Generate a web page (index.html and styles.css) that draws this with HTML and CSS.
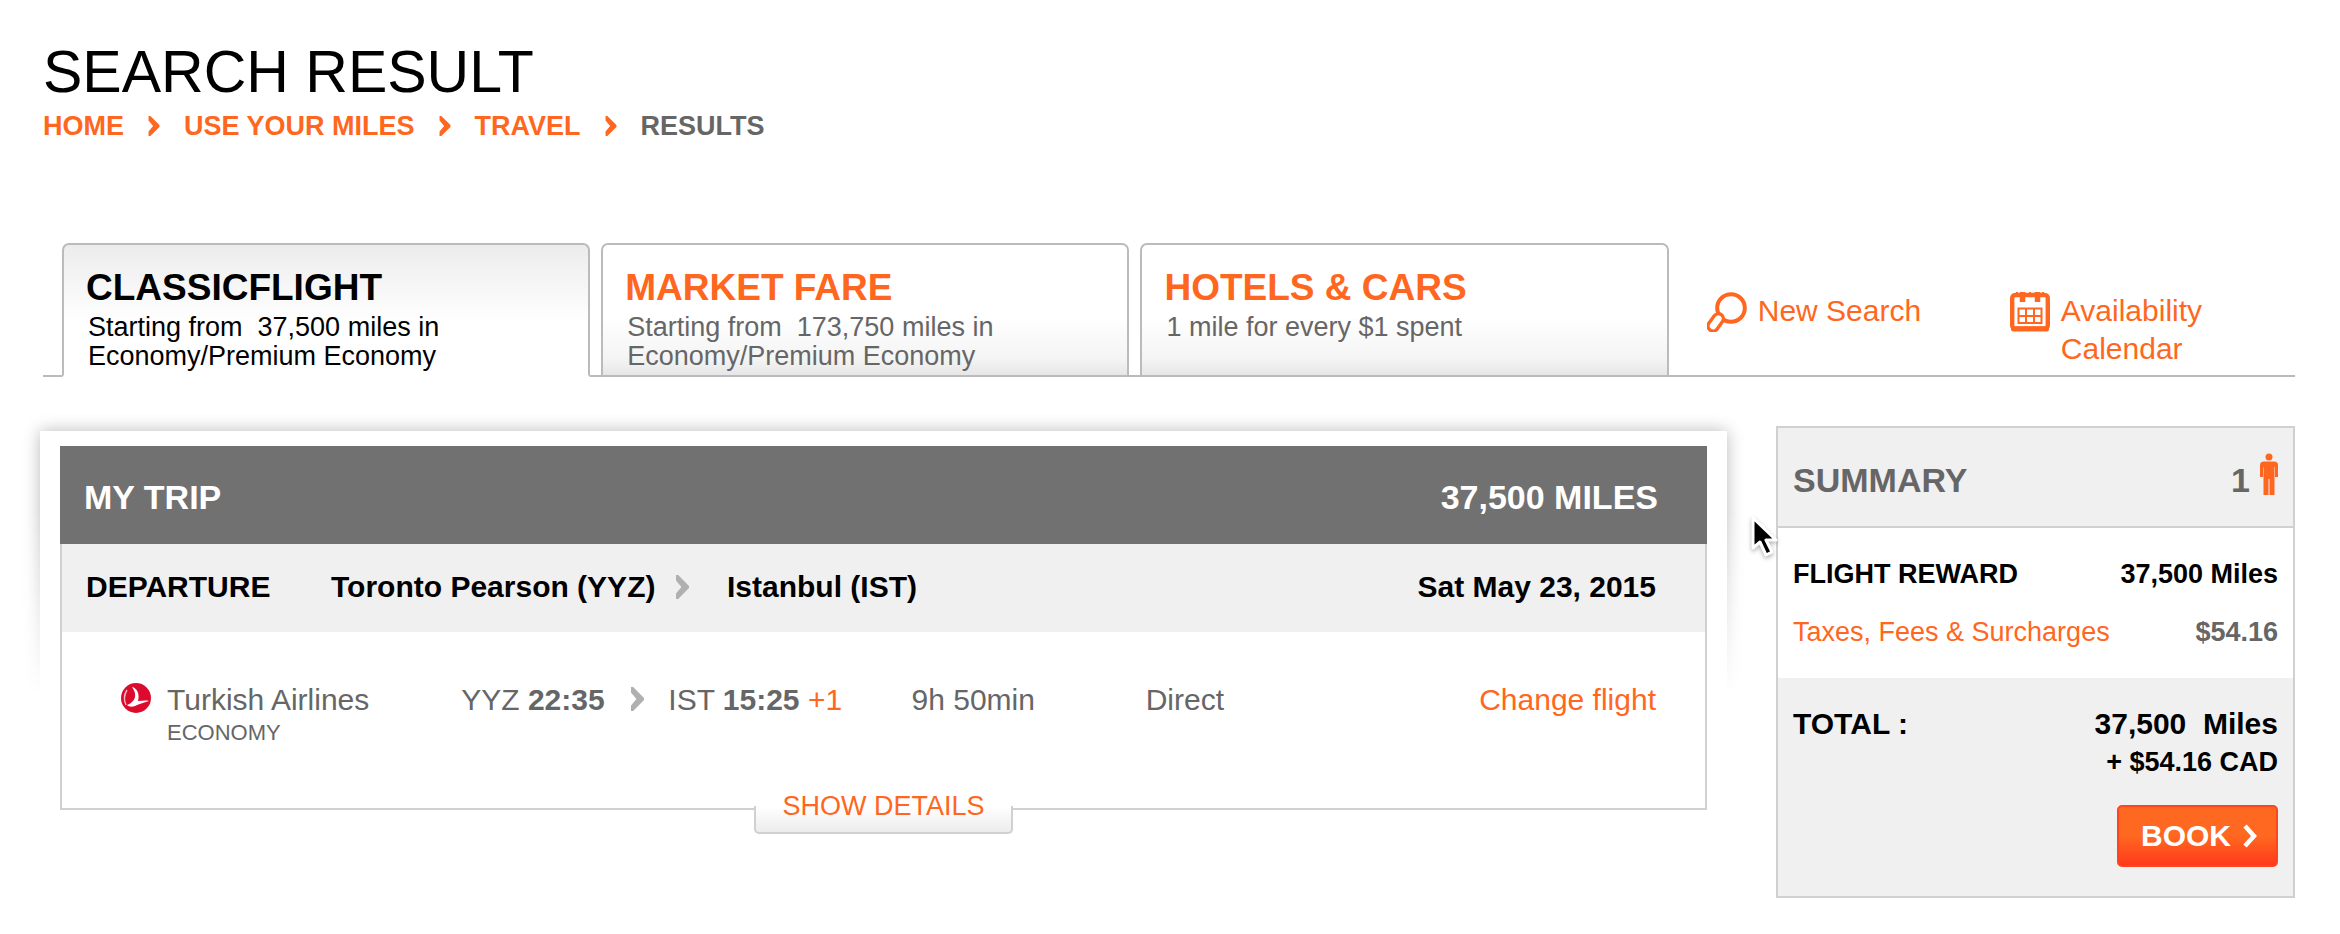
FILE: index.html
```html
<!DOCTYPE html>
<html lang="en">
<head>
<meta charset="utf-8">
<title>Search Result</title>
<link rel="stylesheet" href="styles.css">
</head>
<body>
<svg class="sprite" aria-hidden="true">
  <symbol id="chevron" viewBox="0 0 12 22"><path d="M0 0 L2 0 L12 10 V12 L2 22 H0 V17 L5 11 L0 5 Z"/></symbol>
</svg>

<header class="page-header">
  <h1 class="page-title">SEARCH RESULT</h1>
  <nav class="breadcrumb" aria-label="Breadcrumb">
    <a href="#">HOME</a>
    <svg class="crumb-arrow"><use href="#chevron"/></svg>
    <a href="#">USE YOUR MILES</a>
    <svg class="crumb-arrow"><use href="#chevron"/></svg>
    <a href="#">TRAVEL</a>
    <svg class="crumb-arrow"><use href="#chevron"/></svg>
    <span>RESULTS</span>
  </nav>
</header>

<nav class="tab-bar" aria-label="Reward types">
  <a class="tab tab-active" href="#">
    <span class="tab-title">CLASSICFLIGHT</span>
    <span class="tab-note">Starting from&nbsp; 37,500 miles in<br>Economy/Premium Economy</span>
  </a>
  <a class="tab" href="#">
    <span class="tab-title">MARKET FARE</span>
    <span class="tab-note">Starting from&nbsp; 173,750 miles in<br>Economy/Premium Economy</span>
  </a>
  <a class="tab" href="#">
    <span class="tab-title">HOTELS &amp; CARS</span>
    <span class="tab-note">1 mile for every $1 spent</span>
  </a>
  <div class="tools">
    <a class="tool" href="#">
      <svg class="tool-icon" viewBox="0 0 40 40" fill="none" stroke="currentColor">
        <circle cx="24" cy="16" r="13.8" stroke-width="4"/>
        <rect x="4" y="21" width="10" height="19" rx="5" transform="rotate(36 9 30)" fill="#fff" stroke-width="3.4"/>
      </svg>
      <span>New Search</span>
    </a>
    <a class="tool" href="#">
      <svg class="tool-icon" viewBox="0 0 40 40" fill="none" stroke="currentColor">
        <rect x="2.2" y="3" width="35.6" height="33.500" rx="3" stroke-width="4.4"/>
        <path d="M3.500 37 H36.500" stroke-width="5" stroke-linecap="round"/>
        <path d="M12.500 0 V10 M27.500 0 V10" stroke-width="5.500"/>
        <path d="M6 1 H8 M19 1 H21 M32 1 H34" stroke-width="2"/>
        <path d="M8.500 16.500 H31.500 V31 H8.500 Z M8.500 24 H31.500 M16 16.500 V31 M24 16.500 V31" stroke-width="2"/>
      </svg>
      <span>Availability Calendar</span>
    </a>
  </div>
</nav>

<main class="results">
  <section class="trip-panel">
    <article class="trip">
      <header class="trip-header">
        <h2 class="trip-title">MY TRIP</h2>
        <span>37,500 MILES</span>
      </header>
      <div class="leg">
        <span>DEPARTURE</span>
        <span>Toronto Pearson (YYZ)</span>
        <svg class="leg-arrow"><use href="#chevron"/></svg>
        <span>Istanbul (IST)</span>
        <span class="leg-date">Sat May 23, 2015</span>
      </div>
      <div class="flight">
        <div class="airline">
          <svg class="airline-logo" viewBox="0 0 30 30">
            <circle cx="15" cy="15" r="15" fill="#dc0a2d"/>
            <path d="M11 4 C16 5 19 11 17 18 C21 18 25 17 28 18 C24 19 18 21 14 23 C11 24 8 24 6 22 C11 20 15 16 14 11 C14 8 12 6 11 4 Z" fill="#fff"/>
            <path d="M6 7 C3 12 3 18 5 22" fill="none" stroke="#f7b5bf" stroke-width="1.500"/>
          </svg>
          <div>
            <div>Turkish Airlines</div>
            <div class="cabin">ECONOMY</div>
          </div>
        </div>
        <span>YYZ <b>22:35</b></span>
        <svg class="leg-arrow"><use href="#chevron"/></svg>
        <span>IST <b>15:25</b> <span class="plus-day">+1</span></span>
        <span>9h 50min</span>
        <span>Direct</span>
        <a class="change" href="#">Change flight</a>
      </div>
    </article>
    <button class="details" type="button">SHOW DETAILS</button>
  </section>

  <aside class="summary">
    <header class="summary-header">
      <h2 class="summary-title">SUMMARY</h2>
      <span class="travellers">1
        <svg class="person" viewBox="0 0 18 42" fill="currentColor">
          <circle cx="9" cy="4" r="3.500"/>
          <path d="M4 8.500 H14 Q18 8.500 18 12 V24 H15 V14 H14.500 V42 H9.500 V26 H8.500 V42 H3.500 V14 H3 V24 H0 V12 Q0 8.500 4 8.500 Z"/>
        </svg>
      </span>
    </header>
    <dl class="charges">
      <div class="charge charge-main"><dt>FLIGHT REWARD</dt><dd>37,500 Miles</dd></div>
      <div class="charge"><dt><a href="#">Taxes, Fees &amp; Surcharges</a></dt><dd>$54.16</dd></div>
    </dl>
    <div class="total">
      <div class="total-row">
        <span>TOTAL :</span>
        <span>37,500&nbsp; Miles</span>
      </div>
      <div class="total-cash">+ $54.16 CAD</div>
      <button class="book" type="button">BOOK <svg class="book-arrow" viewBox="0 0 15 24"><path d="M3 2 L12 12 L3 22" fill="none" stroke="currentColor" stroke-width="4.500"/></svg></button>
    </div>
  </aside>
</main>

<svg class="pointer" viewBox="0 0 28 42" aria-hidden="true">
  <path d="M2 2 V32 L9 26 L15 39 L21 36 L15 24 H25 Z" fill="#000" stroke="#fff" stroke-width="3" stroke-linejoin="round"/>
</svg>
</body>
</html>
```
FILE: styles.css
```css
:root {
  --orange: #ff6720;
  --grey: #666;
  --line: #bbb;
  --box: #d0d0d0;
  --pale: #f0f0f0;
}

* {
  box-sizing: border-box;
}

body {
  margin: 0;
  padding: 40px 0 36px;
  position: relative;
  background: #fff;
  color: var(--grey);
  font-family: "Liberation Sans", Arial, sans-serif;
  font-size: 30px;
  line-height: 34px;
}

h1, h2, dl, dd {
  margin: 0;
}

a {
  color: var(--orange);
  text-decoration: none;
}

button {
  font-family: inherit;
  cursor: pointer;
}

.sprite {
  position: absolute;
  width: 0;
  height: 0;
}

.page-header {
  padding: 0 43px;
}

.page-title {
  color: #000;
  font-size: 59px;
  font-weight: 400;
  line-height: 64px;
}

.breadcrumb {
  display: flex;
  align-items: center;
  gap: 24px;
  margin-top: 6px;
  font-size: 27px;
  font-weight: 700;
  line-height: 32px;
}

.crumb-arrow {
  width: 12px;
  height: 20px;
  fill: var(--orange);
}

.tab-bar {
  display: grid;
  grid-template-columns: 528fr 528fr 528fr 615fr;
  column-gap: 11px;
  margin: 101px 45px 0 43px;
  padding-left: 19px;
  border-bottom: 2px solid var(--line);
}

.tab {
  margin-bottom: -2px;
  padding: 23px 22px 4px;
  border: 2px solid var(--line);
  border-radius: 7px 7px 0 0;
  background: linear-gradient(#fff 55%, #f4f4f4 88%, #e6e6e6);
  color: var(--grey);
}

.tab-active {
  border-bottom-color: #fff;
  background: linear-gradient(#ececec, #fff 60%);
  color: #000;
}

.tab-title {
  display: block;
  color: var(--orange);
  font-size: 37px;
  font-weight: 700;
  line-height: 40px;
}

.tab-active .tab-title {
  color: #000;
}

.tab-note {
  display: block;
  padding: 5px 0 0 2px;
  font-size: 27px;
  line-height: 29px;
}

.tools {
  display: grid;
  grid-template-columns: 303fr 285fr;
  padding: 49px 0 0 27px;
  line-height: 38px;
}

.tool {
  display: flex;
  align-items: flex-start;
  gap: 11px;
}

.tool-icon {
  flex: none;
  width: 40px;
  height: 40px;
}

.results {
  display: grid;
  grid-template-columns: 1fr 519px;
  align-items: start;
  column-gap: 49px;
  padding: 49px 45px 0 40px;
}

.trip-panel {
  position: relative;
  isolation: isolate;
  margin-top: 5px;
  padding: 15px 20px 0;
}

/* Shadow round the upper part of the panel, faded out downwards */
.trip-panel::before {
  content: "";
  position: absolute;
  inset: 0 0 33%;
  z-index: -2;
  box-shadow: 0 0 16px rgba(0, 0, 0, 0.28);
}

.trip-panel::after {
  content: "";
  position: absolute;
  inset: 0 -20px;
  z-index: -1;
  background: linear-gradient(rgba(255, 255, 255, 0) 20%, #fff 66%);
}

.trip {
  background: #fff;
}

.trip-header {
  display: flex;
  justify-content: space-between;
  padding: 31px 49px 27px 24px;
  background: #717171;
  color: #fff;
  font-size: 34px;
  font-weight: 700;
  line-height: 40px;
}

.trip-title,
.summary-title {
  font-size: inherit;
}

.leg,
.flight {
  display: grid;
  border: 0 solid var(--box);
}

.leg {
  grid-template-columns: 245fr 345fr 51fr 340fr 589fr;
  align-items: center;
  padding: 26px 49px 28px 24px;
  border-width: 0 2px;
  background: var(--pale);
  color: #000;
  font-weight: 700;
}

.leg-date,
.change {
  text-align: right;
}

.leg-arrow {
  width: 13px;
  height: 24px;
  fill: #b0b0b0;
}

.flight {
  grid-template-columns: 340fr 170fr 37fr 243fr 234fr 200fr 310fr;
  align-items: start;
  padding: 51px 49px 62px 59px;
  border-width: 0 2px 2px;
}

.flight .leg-arrow {
  margin-top: 4px;
}

.airline {
  display: flex;
  gap: 16px;
}

.airline-logo {
  width: 30px;
  height: 30px;
}

.cabin {
  margin-top: 3px;
  font-size: 22px;
  line-height: 26px;
}

.plus-day {
  color: var(--orange);
}

.details {
  display: block;
  position: relative;
  isolation: isolate;
  margin: -19px auto 0;
  padding: 0 28px 13px;
  border: 0;
  background: none;
  color: var(--orange);
  font-size: 27px;
  line-height: 30px;
}

.details::before {
  content: "";
  position: absolute;
  inset: auto 0 0;
  z-index: -1;
  height: 26px;
  border: 2px solid var(--box);
  border-top: 0;
  border-radius: 0 0 5px 5px;
  background: linear-gradient(#fff, #ececec);
}

.summary {
  border: 2px solid var(--box);
}

.summary-header {
  display: flex;
  justify-content: space-between;
  padding: 32px 15px 26px;
  border-bottom: 2px solid var(--box);
  background: var(--pale);
  font-size: 34px;
  font-weight: 700;
  line-height: 40px;
}

.travellers {
  display: flex;
  align-items: flex-end;
  gap: 10px;
  height: 40px;
}

.person {
  width: 18px;
  height: 42px;
  margin-bottom: 5px;
  color: var(--orange);
}

.charges {
  display: grid;
  gap: 26px;
  padding: 30px 15px;
  font-size: 27px;
  line-height: 32px;
}

.charge {
  display: flex;
  justify-content: space-between;
}

.charge dd,
.charge-main {
  font-weight: 700;
}

.charge-main {
  color: #000;
}

.total {
  padding: 27px 15px 29px;
  background: var(--pale);
  color: #000;
  font-weight: 700;
  line-height: 38px;
}

.total-row {
  display: flex;
  justify-content: space-between;
}

.total-cash {
  font-size: 27px;
  text-align: right;
}

.book {
  display: flex;
  align-items: center;
  gap: 11px;
  margin: 24px 0 0 auto;
  padding: 12px 19px 12px 22px;
  border: 2px solid #ff4420;
  border-radius: 5px;
  background: linear-gradient(#ff6820 50%, #ff3a1c);
  color: #fff;
  font-size: 30px;
  font-weight: 700;
  line-height: 34px;
}

.book-arrow {
  width: 15px;
  height: 24px;
}

.pointer {
  position: absolute;
  top: 516px;
  left: 1751px;
  width: 28px;
  height: 42px;
  filter: drop-shadow(0 2px 2px rgba(0, 0, 0, 0.3));
}
```
